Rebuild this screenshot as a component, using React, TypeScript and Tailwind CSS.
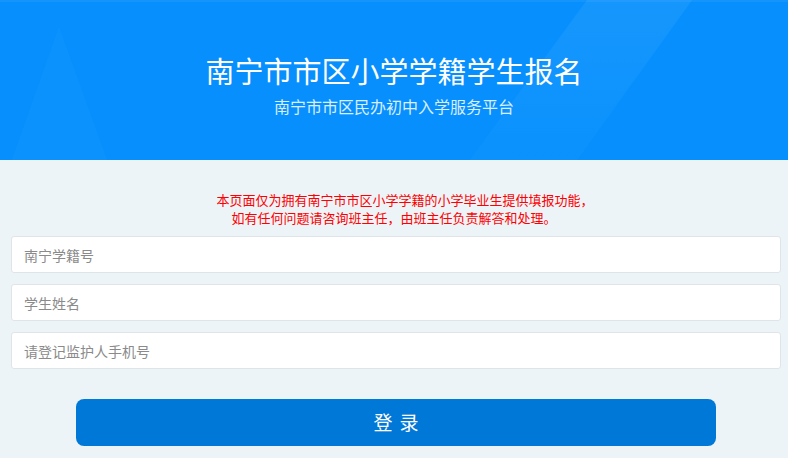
import React, { useState } from 'react';

const font = { fontFamily: '"Noto Sans CJK SC", "Noto Sans", sans-serif' };

const Field: React.FC<{ placeholder: string; value: string; onChange: (v: string) => void }> = ({ placeholder, value, onChange }) => (
    <input
        type="text"
        value={value}
        onChange={(e) => onChange(e.target.value)}
        placeholder={placeholder}
        className="block ml-[11px] w-[770px] h-[37px] px-3 bg-white border border-[#dfe4e8] rounded-[3px] text-[14px] text-[#333] placeholder:text-[#8a8a8a] outline-none"
    />
);

export default function App() {
    const [xjh, setXjh] = useState('');
    const [name, setName] = useState('');
    const [phone, setPhone] = useState('');

    return (
        <div className="w-[788px] h-[458px] bg-[#edf4f8] overflow-hidden" style={font}>
            {/* Header */}
            <div className="relative h-[160px] bg-[#0790fd] flex flex-col items-center pt-[52px] overflow-hidden">
                <svg className="absolute inset-0" width="788" height="160" viewBox="0 0 788 160">
                    <defs>
                        <linearGradient id="band" x1="0" y1="0" x2="0" y2="1">
                            <stop offset="0" stopColor="#ffffff" stopOpacity="0.06" />
                            <stop offset="1" stopColor="#ffffff" stopOpacity="0.015" />
                        </linearGradient>
                    </defs>
                    <rect x="0" y="0" width="788" height="2" fill="#ffffff" fillOpacity="0.05" />
                    <polygon points="59,27 12,160 107,160" fill="#ffffff" fillOpacity="0.025" />
                    <polygon points="587,0 692,0 577,160 470,160" fill="url(#band)" />
                </svg>
                <h1 className="relative text-[29px] leading-[36px] text-white font-normal">南宁市市区小学学籍学生报名</h1>
                <p className="relative mt-[7px] text-[16px] leading-[22px] text-[#d9eeff]">南宁市市区民办初中入学服务平台</p>
            </div>

            {/* Notice */}
            <div className="mt-[31px] text-center text-[13px] leading-[18px] text-[#ff0000]">
                <p className="pl-[22px]">本页面仅为拥有南宁市市区小学学籍的小学毕业生提供填报功能，</p>
                <p>如有任何问题请咨询班主任，由班主任负责解答和处理。</p>
            </div>

            {/* Form */}
            <div className="mt-[9px] flex flex-col gap-[11px]">
                <Field placeholder="南宁学籍号" value={xjh} onChange={setXjh} />
                <Field placeholder="学生姓名" value={name} onChange={setName} />
                <Field placeholder="请登记监护人手机号" value={phone} onChange={setPhone} />
            </div>

            <button className="block ml-[76px] mt-[30px] w-[640px] h-[47px] rounded-[8px] bg-[#0078d7] text-white text-[19px] tracking-[7px] pl-[7px]">
                登录
            </button>
        </div>
    );
}
